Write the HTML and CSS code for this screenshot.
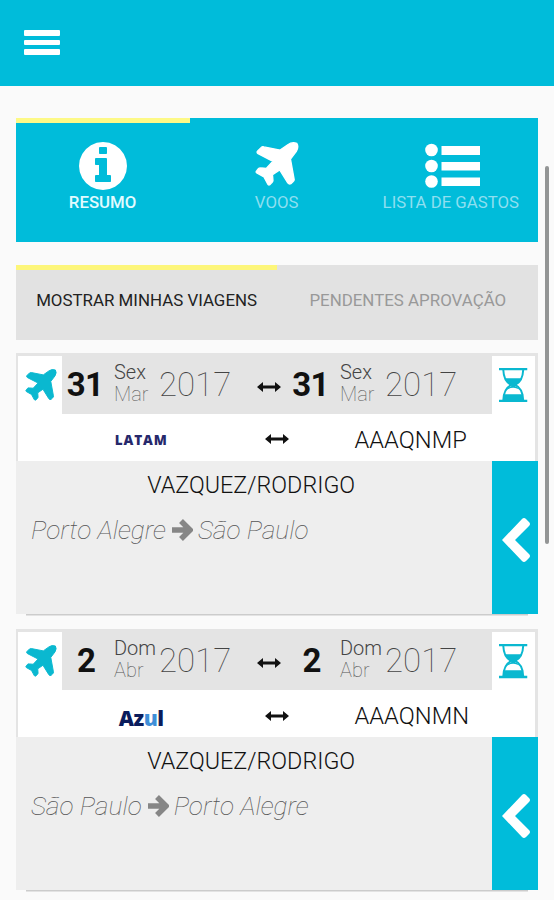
FILE: index.html
```html
<!DOCTYPE html>
<html lang="pt-BR">
<head>
    <meta charset="UTF-8">
    <meta name="viewport" content="width=device-width, initial-scale=1.0">
    <title>Minhas Viagens</title>
    <link rel="stylesheet" href="styles.css">
</head>
<body>
    <svg class="sprite" width="0" height="0">
        <symbol id="plane" viewBox="0 0 98 98">
            <path class="outline" d="M6 20L14 12Q16 10 20 11L56 18L73 6Q83 -1 93 3Q98 11 92 21L79 38L87 82Q88 86 85 88L80 93Q76 95 73 91L55 62L39 73L40 86Q40 89 37 91L33 95Q30 97 28 93L20 78L4 69Q1 67 4 64L8 59Q10 57 14 58L25 59L40 43L7 26Q3 23 6 20Z"/>
        </symbol>
        <symbol id="hourglass" viewBox="0 0 86 104">
            <path d="M0 0h86v7H0zM0 96h86v8H0z"/>
            <path class="line" d="M13 6C14 32 22 44 37 51C22 58 14 70 13 97M73 6C72 32 64 44 49 51C64 58 72 70 73 97"/>
            <path d="M18 31h50C63 43 56 48 49 51v4C56 57 62 62 65 68C51 57 35 57 21 68C24 62 30 57 37 55v-4C30 48 23 43 18 31zM13 79h60v18H13z"/>
        </symbol>
        <symbol id="both" viewBox="0 0 24 12">
            <path d="M0 6L6 1V4.6H18V1L24 6L18 11V7.4H6V11Z"/>
        </symbol>
        <symbol id="right" viewBox="0 0 22 24">
            <path class="thick" d="M1 12H18M10 3L19 12L10 21"/>
        </symbol>
        <symbol id="chevron" viewBox="0 0 28 44">
            <path d="M0 22L20 1Q22 -1 24 1L27 4Q29 6 27 8L13 22L27 36Q29 38 27 40L24 43Q22 45 20 43Z"/>
        </symbol>
    </svg>

    <header>
        <button class="menu" aria-label="Menu"><span></span><span></span><span></span></button>
    </header>

    <main>
        <nav class="tabs">
            <a href="#resumo" class="tab active">
                <svg class="tab-icon" viewBox="128 128 1536 1536"><path d="M1152 1376v-160q0-14-9-23t-23-9h-96v-512q0-14-9-23t-23-9h-320q-14 0-23 9t-9 23v160q0 14 9 23t23 9h96v320h-96q-14 0-23 9t-9 23v160q0 14 9 23t23 9h448q14 0 23-9t9-23zm-128-896v-160q0-14-9-23t-23-9h-192q-14 0-23 9t-9 23v160q0 14 9 23t23 9h192q14 0 23-9t9-23zm640 416q0 209-103 385.5t-279.5 279.5-385.5 103-385.5-103-279.5-279.5-103-385.5 103-385.5 279.5-279.5 385.5-103 385.5 103 279.5 279.5 103 385.5z"/></svg>
                <span>RESUMO</span>
            </a>
            <a href="#voos" class="tab">
                <svg class="tab-icon tab-plane"><use href="#plane"/></svg>
                <span>VOOS</span>
            </a>
            <a href="#gastos" class="tab">
                <svg class="tab-icon tab-list" viewBox="0 0 56 48"><circle cx="6.5" cy="8" r="6.3"/><circle cx="6.5" cy="24" r="6.3"/><circle cx="6.5" cy="39.5" r="6.3"/><path d="M16.5 4H55v9H16.5zM16.5 20H55v8.5H16.5zM16.5 35.5H55V44H16.5z"/></svg>
                <span>LISTA DE GASTOS</span>
            </a>
        </nav>

        <nav class="subtabs">
            <a href="#minhas" class="subtab active">MOSTRAR MINHAS VIAGENS</a>
            <a href="#pendentes" class="subtab">PENDENTES APROVAÇÃO</a>
        </nav>

        <section class="trip">
            <div class="trip-head">
                <div class="box plane-box"><svg><use href="#plane"/></svg></div>
                <div class="dates">
                    <b class="day">31</b>
                    <div class="week"><span>Sex</span><span class="month">Mar</span></div>
                    <span class="year">2017</span>
                    <svg class="both"><use href="#both"/></svg>
                    <b class="day">31</b>
                    <div class="week"><span>Sex</span><span class="month">Mar</span></div>
                    <span class="year">2017</span>
                </div>
                <div class="box status-box"><svg><use href="#hourglass"/></svg></div>
            </div>
            <div class="trip-flight">
                <span class="airline latam">LATAM</span>
                <svg class="both"><use href="#both"/></svg>
                <span class="code">AAAQNMP</span>
            </div>
            <div class="trip-body">
                <div class="info">
                    <div class="name">VAZQUEZ/RODRIGO</div>
                    <div class="route">Porto Alegre<svg><use href="#right"/></svg>São Paulo</div>
                </div>
                <button class="open" aria-label="Abrir"><svg><use href="#chevron"/></svg></button>
            </div>
        </section>

        <section class="trip">
            <div class="trip-head">
                <div class="box plane-box"><svg><use href="#plane"/></svg></div>
                <div class="dates">
                    <b class="day single">2</b>
                    <div class="week"><span>Dom</span><span class="month">Abr</span></div>
                    <span class="year">2017</span>
                    <svg class="both"><use href="#both"/></svg>
                    <b class="day single">2</b>
                    <div class="week"><span>Dom</span><span class="month">Abr</span></div>
                    <span class="year">2017</span>
                </div>
                <div class="box status-box"><svg><use href="#hourglass"/></svg></div>
            </div>
            <div class="trip-flight">
                <span class="airline azul">Az<i>u</i>l</span>
                <svg class="both"><use href="#both"/></svg>
                <span class="code">AAAQNMN</span>
            </div>
            <div class="trip-body">
                <div class="info">
                    <div class="name">VAZQUEZ/RODRIGO</div>
                    <div class="route">São Paulo<svg><use href="#right"/></svg>Porto Alegre</div>
                </div>
                <button class="open" aria-label="Abrir"><svg><use href="#chevron"/></svg></button>
            </div>
        </section>
    </main>

    <div class="scrollbar"></div>
</body>
</html>
```

FILE: styles.css
```css
* {
    box-sizing: border-box;
}

body {
    font-family: Roboto, sans-serif;
    margin: 0;
    height: 900px;
    overflow: hidden;
    position: relative;
    background-color: #fafafa;
    color: #111;
}

a {
    text-decoration: none;
}

svg {
    display: block;
    fill: currentColor;
}

.sprite {
    position: absolute;
}

.outline {
    stroke: currentColor;
    stroke-width: 3;
}

.line {
    fill: none;
    stroke: currentColor;
    stroke-width: 6;
}

.thick {
    fill: none;
    stroke: currentColor;
    stroke-width: 5.5;
}

header {
    height: 85.5px;
    padding: 30px 24px;
    background-color: #00bcda;
}

.menu {
    display: flex;
    flex-direction: column;
    gap: 4px;
    width: 36px;
    padding: 0;
    border: none;
    background: none;
}

.menu span {
    height: 5.7px;
    width: 100%;
    border-radius: 1px;
    background: white;
}

main {
    width: 522.4px;
    margin: 32.5px 0 0 16px;
}

.tabs {
    display: grid;
    grid-template-columns: repeat(3, 1fr);
    height: 123.5px;
    background-color: #00bcda;
}

.tab {
    display: flex;
    flex-direction: column;
    align-items: center;
    padding: 19px 1px 0 0;
    border-top: 5px solid transparent;
    color: #8edff0;
    font-size: 16.8px;
    line-height: 20px;
    white-space: nowrap;
}

.tab.active {
    border-color: #fdf986;
    color: #e2fbff;
    font-weight: 500;
}

.tab-icon {
    width: 48px;
    height: 48px;
    margin-bottom: 2px;
    color: white;
}

.tab-plane {
    width: 44px;
    height: 44px;
    margin-bottom: 6px;
}

.tab-list {
    width: 56px;
    margin-left: 5px;
}

.subtabs {
    display: grid;
    grid-template-columns: 1fr 1fr;
    height: 75px;
    margin: 23.5px 0 12.5px;
    background-color: #e2e2e2;
}

.subtab {
    padding-top: 20px;
    border-top: 5px solid transparent;
    text-align: center;
    font-size: 16.9px;
    line-height: 20px;
    color: #999;
}

.subtab.active {
    border-color: #fdf67a;
    color: #222;
}

.trip {
    margin-bottom: 15.5px;
    box-shadow: 0 11.5px 0 -10px #ccc;
}

.trip-head {
    display: flex;
    height: 61px;
    border: solid #e4e4e4;
    border-width: 3px 3px 0 2px;
    background: #e4e4e4;
}

.box {
    background: white;
    color: #0ab8d0;
}

.plane-box {
    width: 44px;
    padding: 13px 0 0 6.5px;
}

.plane-box svg {
    width: 32px;
    height: 32px;
}

.status-box {
    width: 43.5px;
    padding: 12px 0 0 7.5px;
}

.status-box svg {
    width: 28.5px;
    height: 34.5px;
}

.dates {
    flex: 1;
    display: grid;
    grid-template-columns: 52px 45px 98px 30px 53px 45px 1fr;
    align-items: start;
}

.day {
    padding: 9px 6px 0 0;
    text-align: center;
    font-size: 33px;
    line-height: 40px;
    letter-spacing: -0.8px;
}

.day.single {
    padding-right: 4px;
}

.week {
    display: flex;
    flex-direction: column;
    padding-top: 5px;
    font-size: 20px;
    font-weight: 300;
    line-height: 22px;
    color: #444;
}

.month {
    font-weight: 100;
    color: #555;
}

.year {
    padding-top: 9px;
    font-size: 33px;
    font-weight: 100;
    line-height: 40px;
    color: #444;
}

.both {
    width: 24px;
    height: 12px;
    color: #111;
}

.dates .both {
    margin-top: 25px;
}

.trip-flight {
    display: grid;
    grid-template-columns: 246.5px 24px 1fr;
    align-items: center;
    height: 47px;
    border: solid #e4e4e4;
    border-width: 0 3px 0 2px;
    background: white;
}

.trip-flight .both {
    margin-top: 4px;
}

.airline {
    text-align: center;
    font-family: "Open Sans", sans-serif;
    font-weight: 800;
}

.latam {
    padding-top: 6px;
    font-size: 13.5px;
    letter-spacing: 0.9px;
    color: #26286b;
}

.azul {
    padding-top: 9px;
    font-size: 21px;
    letter-spacing: -0.5px;
    color: #0a1c5c;
}

.azul i {
    font-style: normal;
    color: #3f8fd8;
}

.code {
    padding: 5px 0 0 66px;
    font-size: 23.7px;
    font-weight: 300;
}

.trip-body {
    display: flex;
    height: 153px;
    background: #eee;
}

.info {
    flex: 1;
}

.name {
    padding-top: 10px;
    margin-left: -6px;
    text-align: center;
    font-size: 23.3px;
    font-weight: 300;
    line-height: 28px;
}

.route {
    display: flex;
    align-items: center;
    padding: 16px 0 0 15px;
    font-size: 26.3px;
    font-style: italic;
    font-weight: 100;
    line-height: 30px;
    color: #555;
}

.route svg {
    width: 22px;
    height: 24px;
    margin: 0 5px;
    color: #868686;
}

.open {
    width: 46px;
    padding: 5px 0 0 9.5px;
    border: none;
    background: #00bcda;
    color: white;
}

.open svg {
    width: 28px;
    height: 44px;
}

.scrollbar {
    position: absolute;
    top: 166px;
    left: 545px;
    width: 4px;
    height: 378px;
    border-radius: 2px;
    background: #939595;
}
```
